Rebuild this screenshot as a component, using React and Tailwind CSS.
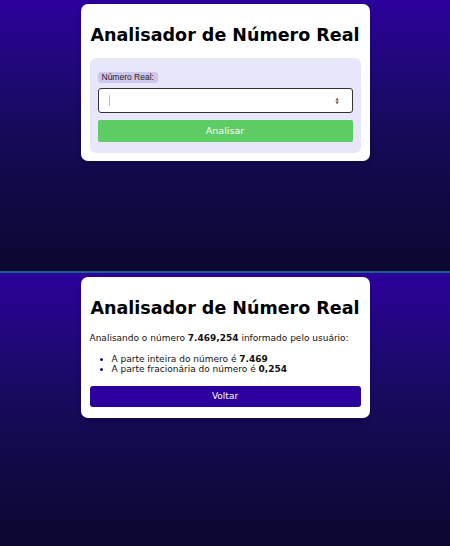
export default function App() {
  const font = { fontFamily: '"DejaVu Sans", Verdana, sans-serif' };
  return (
    <div className="w-[450px] h-[546px] flex flex-col bg-[#0c0a30]" style={font}>
      <div className="h-[271px] flex justify-center bg-gradient-to-b from-[#2c009c] via-[#160a58] to-[#0b0830] pt-[4px]">
        <div className="w-[289px] self-start bg-white rounded-[7px] shadow-md px-[9px] pb-[8px] flex flex-col">
          <h1 className="text-[17.5px] font-bold text-black text-center mt-[19px] leading-[24px] whitespace-nowrap">Analisador de Número Real</h1>
          <div className="mt-[11px] bg-[#e8e6fb] rounded-[6px] px-[8px] pt-[14px] pb-[11px] flex flex-col">
            <span className="self-start bg-[#cdc7ef] rounded-[3px] px-[4px] h-[11px] text-[8.5px] leading-[11px] text-[#222]" style={{ fontFamily: '"Liberation Sans", Arial, sans-serif' }}>Número Real:</span>
            <div className="mt-[5px] h-[25px] bg-white border border-[#333] rounded-[3px] flex items-center pl-[10px] pr-[13px] justify-between">
              <span className="w-px h-[11px] bg-[#bbb]"></span>
              <span className="text-[4px] leading-[4px] text-[#555] flex flex-col items-center"><span>▲</span><span>▼</span></span>
            </div>
            <button className="mt-[7px] h-[22px] bg-[#5ccc63] rounded-[2px] text-white text-[9.5px]">Analisar</button>
          </div>
        </div>
      </div>
      <div className="h-[2px] bg-[#1d5f8a]"></div>
      <div className="flex-1 flex justify-center bg-gradient-to-b from-[#2c009c] via-[#160a58] to-[#0b0830] pt-[4px]">
        <div className="w-[289px] self-start bg-white rounded-[7px] shadow-md px-[9px] pb-[11px] flex flex-col">
          <h1 className="text-[17.5px] font-bold text-black text-center mt-[19px] leading-[24px] whitespace-nowrap">Analisador de Número Real</h1>
          <p className="mt-[12px] text-[9px] leading-[12px] text-[#111] whitespace-nowrap">Analisando o número <b>7.469,254</b> informado pelo usuário:</p>
          <ul className="mt-[10px] pl-[22px] list-disc marker:text-[#2a0099] text-[9px] leading-[10px] text-[#111]">
            <li>A parte inteira do número é <b>7.469</b></li>
            <li>A parte fracionária do número é <b>0,254</b></li>
          </ul>
          <button className="mt-[12px] h-[21px] bg-[#2c009c] rounded-[3px] text-white text-[9px]">Voltar</button>
        </div>
      </div>
    </div>
  );
}
